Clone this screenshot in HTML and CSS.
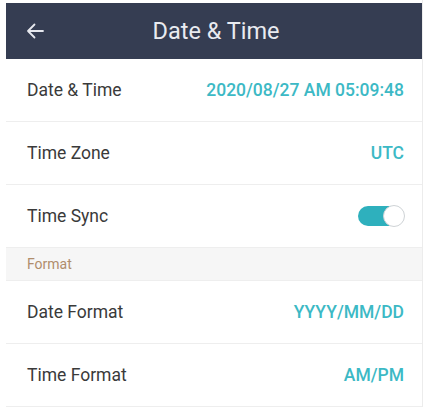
FILE: index.html
```html
<!DOCTYPE html>
<html>
<head>
<meta charset="utf-8">
<link rel="stylesheet" href="styles.css">
</head>
<body>
<div class="screen">
  <div class="gap"></div>
  <div class="header">
    <svg class="back" width="20" height="18" viewBox="0 0 20 18"><path d="M18 9H3M9.5 2.5L3 9l6.5 6.5" fill="none" stroke="#e6e8ee" stroke-width="1.8" stroke-linecap="round" stroke-linejoin="round"/></svg>
    <div class="title">Date &amp; Time</div>
  </div>
  <div class="row"><span class="label">Date &amp; Time</span><span class="value">2020/08/27 AM 05:09:48</span></div>
  <div class="row"><span class="label">Time Zone</span><span class="value">UTC</span></div>
  <div class="row"><span class="label">Time Sync</span><span class="toggle"><span class="knob"></span></span></div>
  <div class="section">Format</div>
  <div class="row"><span class="label">Date Format</span><span class="value">YYYY/MM/DD</span></div>
  <div class="row"><span class="label">Time Format</span><span class="value">AM/PM</span></div>
</div>
</body>
</html>
```
FILE: styles.css
```css
html, body { margin: 0; padding: 0; background: #fff; }
body { font-family: Roboto, "Noto Sans", sans-serif; width: 426px; height: 409px; overflow: hidden; }
.screen { margin-left: 6px; width: 416px; border-right: 1px solid #ececec; }
.gap { height: 3px; }
.header { height: 56px; background: #353d52; display: flex; align-items: center; position: relative; }
.back { margin-left: 19px; }
.title { position: absolute; left: 0; right: 0; text-align: center; color: #e9ebf0; font-size: 23.5px; padding-left: 4px; pointer-events: none; }
.row { height: 62px; border-bottom: 1px solid #eeeeee; display: flex; align-items: center; justify-content: space-between; padding: 0 18px 0 21px; }
.label { font-size: 17.5px; color: #3a3a3a; }
.value { font-size: 17.5px; font-weight: 500; color: #3cb9c5; }
.section { height: 32px; background: #f6f6f6; border-bottom: 1px solid #eeeeee; display: flex; align-items: center; padding-left: 21px; font-size: 14px; color: #b08d6c; }
.toggle { width: 46px; height: 20px; border-radius: 10px; background: #2eb0bd; position: relative; }
.knob { position: absolute; right: -1px; top: -1px; width: 20px; height: 20px; border-radius: 50%; background: #fff; border: 1px solid #cfd3d6; }
```
